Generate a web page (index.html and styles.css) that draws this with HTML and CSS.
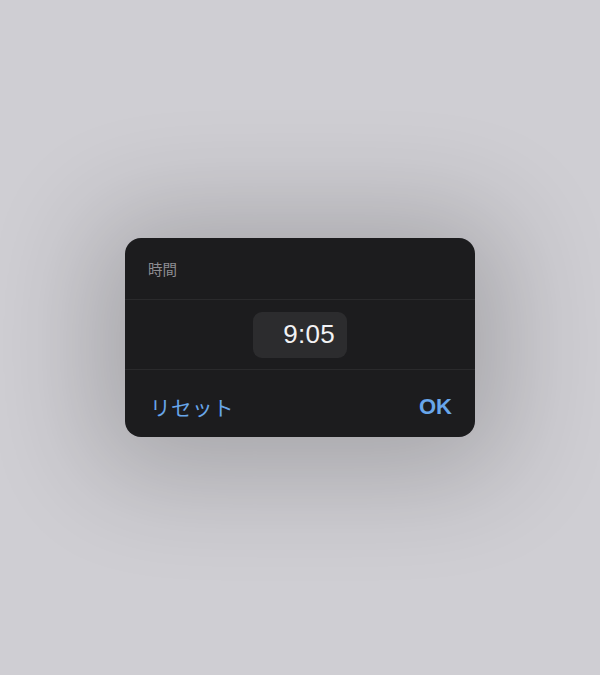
FILE: index.html
```html
<!DOCTYPE html>
<html lang="ja">
<head>
<meta charset="utf-8">
<link rel="stylesheet" href="styles.css">
</head>
<body>
<div class="screen">
  <div class="dialog">
    <div class="header"><span class="title">時間</span></div>
    <div class="picker-row">
      <div class="time-pill">9:05</div>
    </div>
    <div class="footer">
      <span class="btn reset">リセット</span>
      <span class="btn ok">OK</span>
    </div>
  </div>
</div>
</body>
</html>
```
FILE: styles.css
```css
html, body {
  margin: 0;
  padding: 0;
  width: 600px;
  height: 675px;
  overflow: hidden;
}
body {
  background: #cfced3;
  font-family: "Liberation Sans", "Noto Sans CJK JP", sans-serif;
}
.screen {
  width: 600px;
  height: 675px;
  display: flex;
  align-items: center;
  justify-content: center;
  background: #cfced3;
}
.dialog {
  width: 350px;
  background: #1c1c1e;
  border-radius: 16px;
  box-shadow: 0 8px 110px 30px rgba(0, 0, 0, 0.2);
  display: flex;
  flex-direction: column;
  margin-top: 0;
}
.header {
  height: 61px;
  display: flex;
  align-items: center;
  padding: 0 23px;
  border-bottom: 1px solid #2a2a2c;
}
.title {
  font-family: "Noto Sans CJK JP", sans-serif;
  font-size: 14.5px;
  color: #8d8d92;
}
.picker-row {
  height: 69px;
  display: flex;
  align-items: center;
  justify-content: center;
  border-bottom: 1px solid #2a2a2c;
}
.time-pill {
  width: 94px;
  height: 46px;
  box-sizing: border-box;
  border-radius: 9px;
  background: #2c2c2e;
  color: #f2f2f4;
  font-family: "Liberation Sans", sans-serif;
  font-size: 26px;
  display: flex;
  align-items: center;
  justify-content: flex-end;
  padding-right: 12px;
  letter-spacing: 0.3px;
}
.footer {
  height: 67px;
  box-sizing: border-box;
  padding: 6px 23px 0 25px;
  display: flex;
  align-items: center;
  justify-content: space-between;
}
.btn {
  color: #68a6ea;
}
.reset {
  font-family: "Noto Sans CJK JP", sans-serif;
  font-size: 20.5px;
  letter-spacing: 0.5px;
}
.ok {
  font-family: "Liberation Sans", sans-serif;
  font-weight: bold;
  font-size: 22px;
}
```
